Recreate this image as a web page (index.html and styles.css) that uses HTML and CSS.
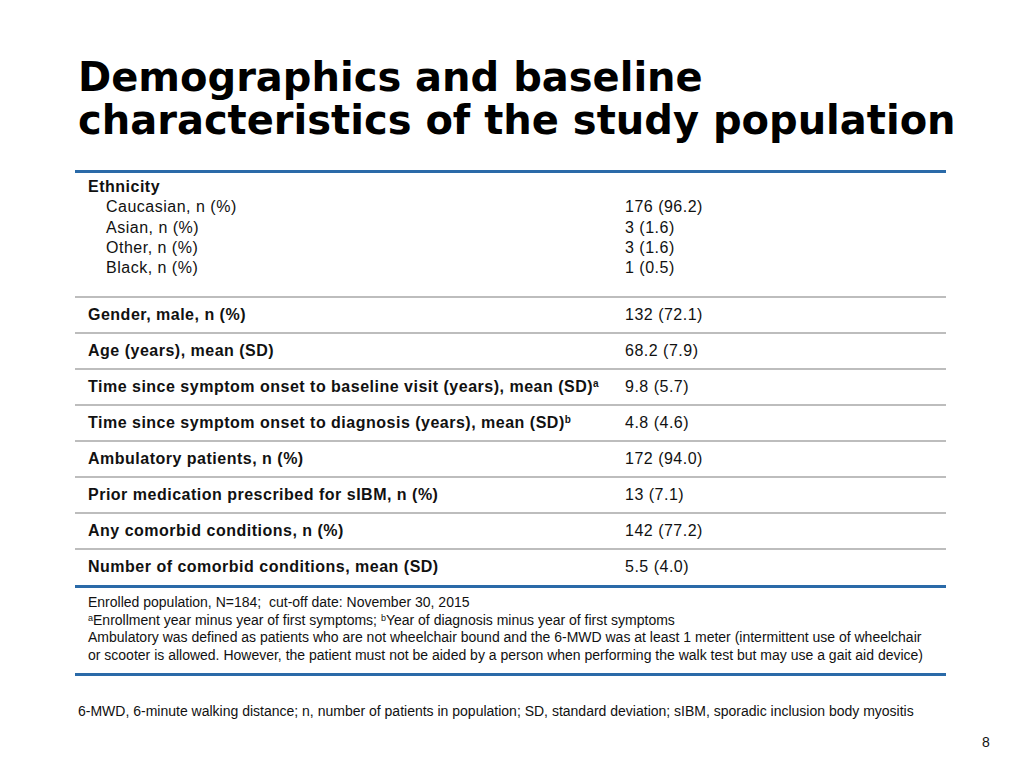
FILE: index.html
```html
<!DOCTYPE html>
<html lang="en">
<head>
<meta charset="utf-8">
<title>Demographics and baseline characteristics</title>
<link rel="stylesheet" href="styles.css">
</head>
<body>
<div class="slide">
  <h1 class="title">Demographics and baseline<br>characteristics of the study population</h1>

  <div class="table">
    <div class="row group">
      <div class="label">
        <div class="bold">Ethnicity</div>
        <div class="sub">Caucasian, n (%)</div>
        <div class="sub">Asian, n (%)</div>
        <div class="sub">Other, n (%)</div>
        <div class="sub">Black, n (%)</div>
      </div>
      <div class="value">
        <div>&nbsp;</div>
        <div>176 (96.2)</div>
        <div>3 (1.6)</div>
        <div>3 (1.6)</div>
        <div>1 (0.5)</div>
      </div>
    </div>
    <div class="row"><div class="label bold">Gender, male, n (%)</div><div class="value">132 (72.1)</div></div>
    <div class="row"><div class="label bold">Age (years), mean (SD)</div><div class="value">68.2 (7.9)</div></div>
    <div class="row"><div class="label bold">Time since symptom onset to baseline visit (years), mean (SD)<sup>a</sup></div><div class="value">9.8 (5.7)</div></div>
    <div class="row"><div class="label bold">Time since symptom onset to diagnosis (years), mean (SD)<sup>b</sup></div><div class="value">4.8 (4.6)</div></div>
    <div class="row"><div class="label bold">Ambulatory patients, n (%)</div><div class="value">172 (94.0)</div></div>
    <div class="row"><div class="label bold">Prior medication prescribed for sIBM, n (%)</div><div class="value">13 (7.1)</div></div>
    <div class="row"><div class="label bold">Any comorbid conditions, n (%)</div><div class="value">142 (77.2)</div></div>
    <div class="row"><div class="label bold">Number of comorbid conditions, mean (SD)</div><div class="value">5.5 (4.0)</div></div>
    <div class="notes">
      <p>Enrolled population, N=184;&nbsp; cut-off date: November 30, 2015</p>
      <p><sup>a</sup>Enrollment year minus year of first symptoms; <sup>b</sup>Year of diagnosis minus year of first symptoms</p>
      <p>Ambulatory was defined as patients who are not wheelchair bound and the 6-MWD was at least 1 meter (intermittent use of wheelchair or scooter is allowed. However, the patient must not be aided by a person when performing the walk test but may use a gait aid device)</p>
    </div>
  </div>

  <p class="abbrev">6-MWD, 6-minute walking distance; n, number of patients in population; SD, standard deviation; sIBM, sporadic inclusion body myositis</p>
  <div class="page-num">8</div>
</div>
</body>
</html>
```
FILE: styles.css
```css
html, body {
  margin: 0;
  padding: 0;
  background: #ffffff;
}
body {
  font-family: "Liberation Sans", Arial, sans-serif;
  color: #111111;
}
.slide {
  width: 1024px;
  height: 768px;
  position: relative;
  display: flex;
  flex-direction: column;
}
.title {
  margin: 56px 0 0 78px;
  font-family: "DejaVu Sans", "Liberation Sans", sans-serif;
  font-size: 40px;
  line-height: 43px;
  font-weight: 700;
  color: #000000;
}
.table {
  margin: 28px 0 0 75px;
  width: 871px;
  border-top: 3px solid #2a6aa8;
  font-size: 16px;
  letter-spacing: 0.5px;
  line-height: 20px;
}
.row {
  display: flex;
  align-items: center;
  min-height: 34px;
  border-top: 2px solid #bdbdbd;
}
.row.group {
  border-top: none;
  align-items: flex-start;
  line-height: 20.3px;
  padding: 4px 0 18px;
}
.label {
  width: 537px;
  padding-left: 13px;
}
.value {
  flex: 1;
}
.bold {
  font-weight: 700;
}
.sub {
  padding-left: 18px;
}
sup {
  font-size: 10px;
  line-height: 0;
  vertical-align: 5px;
  letter-spacing: 0;
}
.notes {
  border-top: 3px solid #2a6aa8;
  border-bottom: 3px solid #2a6aa8;
  margin-top: 1px;
  padding: 6px 13px 9px;
  font-size: 14px;
  letter-spacing: 0;
  line-height: 17.5px;
}
.notes p {
  margin: 0;
}
.notes sup {
  font-size: 9px;
  vertical-align: 4px;
}
.abbrev {
  margin: 27px 0 0 78px;
  font-size: 14px;
  line-height: 17px;
}
.page-num {
  position: absolute;
  left: 982px;
  top: 734px;
  font-size: 14px;
  line-height: 16px;
}
```
